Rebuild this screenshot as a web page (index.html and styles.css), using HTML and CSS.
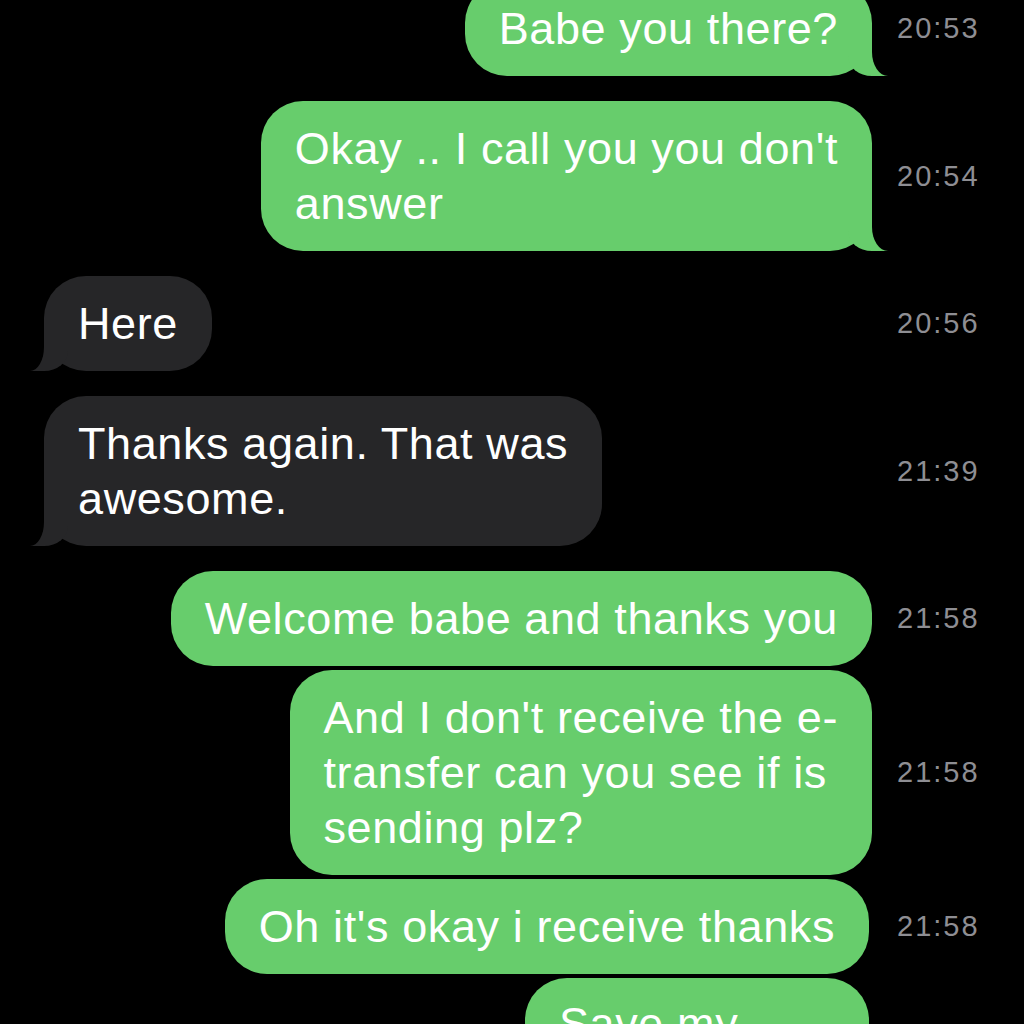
FILE: index.html
```html
<!DOCTYPE html>
<html lang="en">
<head>
    <meta charset="UTF-8">
    <meta name="viewport" content="width=device-width, initial-scale=1.0">
    <title>Messages</title>
    <link rel="stylesheet" href="styles.css">
</head>
<body>
    <!-- Conversation -->
    <div class="thread">
        <div class="row sent">
            <div class="side"><div class="bubble tail">Babe you there?</div></div>
            <div class="time">20:53</div>
        </div>
        <div class="row sent">
            <div class="side"><div class="bubble tail">Okay .. I call you you don't<br>answer</div></div>
            <div class="time">20:54</div>
        </div>
        <div class="row received">
            <div class="side"><div class="bubble tail">Here</div></div>
            <div class="time">20:56</div>
        </div>
        <div class="row received">
            <div class="side"><div class="bubble tail">Thanks again. That was<br>awesome.</div></div>
            <div class="time">21:39</div>
        </div>
        <div class="row sent">
            <div class="side"><div class="bubble">Welcome babe and thanks you</div></div>
            <div class="time">21:58</div>
        </div>
        <div class="row sent group">
            <div class="side"><div class="bubble">And I don't receive the e-<br>transfer can you see if is<br>sending plz?</div></div>
            <div class="time">21:58</div>
        </div>
        <div class="row sent group">
            <div class="side"><div class="bubble narrow">Oh it's okay i receive thanks</div></div>
            <div class="time">21:58</div>
        </div>
        <div class="row sent group">
            <div class="side"><div class="bubble narrow cut">Save my</div></div>
            <div class="time"></div>
        </div>
    </div>
</body>
</html>
```

FILE: styles.css
```css
:root {
    --green: #67cd6c;
    --gray: #262628;
    --time: #8e8e93;
}

body {
    margin: 0;
    background: #000;
    font-family: "Liberation Sans", Arial, sans-serif;
    color: #fff;
    overflow: hidden;
}

.thread {
    margin-top: -19px;
    display: flex;
    flex-direction: column;
}

.row {
    display: flex;
    align-items: center;
    margin-top: 25px;
}

.row:first-child {
    margin-top: 0;
}

.row.group {
    margin-top: 4px;
}

.side {
    flex: 1;
    display: flex;
    padding: 0 25px 0 44px;
}

.sent .side {
    justify-content: flex-end;
}

.received .side {
    justify-content: flex-start;
}

.time {
    width: 127px;
    font-size: 29px;
    letter-spacing: 2px;
    color: var(--time);
}

.bubble {
    position: relative;
    padding: 20px 34px;
    font-size: 45px;
    line-height: 55px;
    letter-spacing: 0.6px;
    border-radius: 42px;
    white-space: nowrap;
}

.sent .bubble {
    background: var(--green);
}

.received .bubble {
    background: var(--gray);
}

.bubble.narrow {
    margin-right: 3px;
}

.bubble.cut {
    width: 344px;
    box-sizing: border-box;
    padding-top: 18px;
}

/* Colas de las burbujas */
.bubble.tail::before,
.bubble.tail::after {
    content: "";
    position: absolute;
    bottom: 0;
    height: 42px;
}

.sent .bubble.tail::before {
    right: -16px;
    width: 40px;
    background: var(--green);
    border-bottom-left-radius: 24px 20px;
}

.sent .bubble.tail::after {
    right: -22px;
    width: 22px;
    background: #000;
    border-bottom-left-radius: 16px 24px;
}

.received .bubble.tail::before {
    left: -14px;
    width: 38px;
    background: var(--gray);
    border-bottom-right-radius: 24px 20px;
}

.received .bubble.tail::after {
    left: -20px;
    width: 20px;
    background: #000;
    border-bottom-right-radius: 14px 24px;
}
```
